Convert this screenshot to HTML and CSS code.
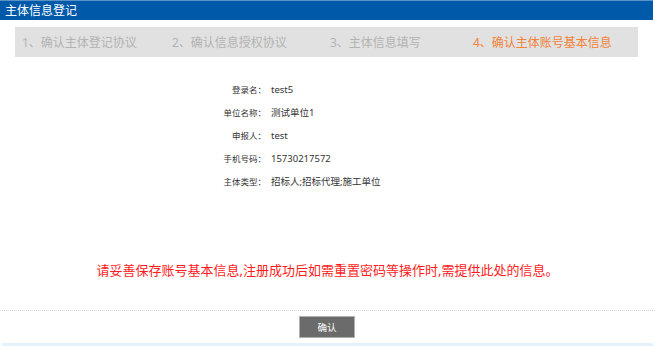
FILE: index.html
```html
<!DOCTYPE html>
<html lang="zh-CN">
<head>
    <meta charset="UTF-8">
    <meta name="viewport" content="width=device-width, initial-scale=1.0">
    <title>主体信息登记</title>
    <link rel="stylesheet" href="styles.css">
</head>
<body>
    <div class="header">主体信息登记</div>

    <div class="steps">
        <div class="step step-1">1、确认主体登记协议</div>
        <div class="step step-2">2、确认信息授权协议</div>
        <div class="step step-3">3、主体信息填写</div>
        <div class="step step-4 active">4、确认主体账号基本信息</div>
    </div>

    <div class="info">
        <div class="row"><span class="label">登录名：</span><span class="value">test5</span></div>
        <div class="row"><span class="label">单位名称：</span><span class="value">测试单位1</span></div>
        <div class="row"><span class="label">申报人：</span><span class="value">test</span></div>
        <div class="row"><span class="label">手机号码：</span><span class="value">15730217572</span></div>
        <div class="row"><span class="label">主体类型：</span><span class="value">招标人;招标代理;施工单位</span></div>
    </div>

    <div class="notice">请妥善保存账号基本信息,注册成功后如需重置密码等操作时,需提供此处的信息。</div>

    <div class="footer">
        <button type="button" class="btn">确认</button>
    </div>
    <div class="bottom-bar"></div>
</body>
</html>
```

FILE: styles.css
```css
body {
    margin: 0;
    width: 655px;
    font-family: "Noto Sans", "Noto Sans CJK SC", sans-serif;
    background-color: #fff;
}
.header {
    height: 19px;
    line-height: 19px;
    margin-right: 2px;
    padding-left: 5px;
    border-top: 1px solid #5b93c9;
    background-color: #0059a9;
    color: #fff;
    font-size: 12px;
}
.steps {
    display: flex;
    align-items: center;
    height: 30px;
    margin: 7px 17px 0 15px;
    padding-left: 7px;
    background-color: #e1e1e1;
    font-size: 12px;
    color: #b3b3b3;
}
.step-1 {
    width: 150px;
}
.step-2 {
    width: 158px;
}
.step-3 {
    width: 143px;
}
.active {
    color: #f3823a;
}
.info {
    padding-top: 21px;
    font-size: 8.5px;
    color: #333;
}
.row {
    display: flex;
    align-items: baseline;
    line-height: 23px;
}
.label {
    width: 266px;
    text-align: right;
}
.value {
    padding-left: 5px;
    font-size: 9.5px;
}
.notice {
    margin-top: 67px;
    line-height: 20px;
    text-align: center;
    font-size: 13px;
    color: #ff1c1c;
}
.footer {
    margin-top: 30px;
    padding-top: 3px;
    border-top: 1px dotted #d9d9cc;
    text-align: center;
    height: 29px;
}
.btn {
    width: 56px;
    height: 22px;
    margin-left: -1px;
    padding: 0;
    border: 1px solid #b0b0b0;
    background-color: #6b6b6b;
    color: #fff;
    font-family: inherit;
    font-size: 9.5px;
}
.bottom-bar {
    height: 3px;
    margin: 0 2px;
    background-color: #e4f2fb;
}
```
